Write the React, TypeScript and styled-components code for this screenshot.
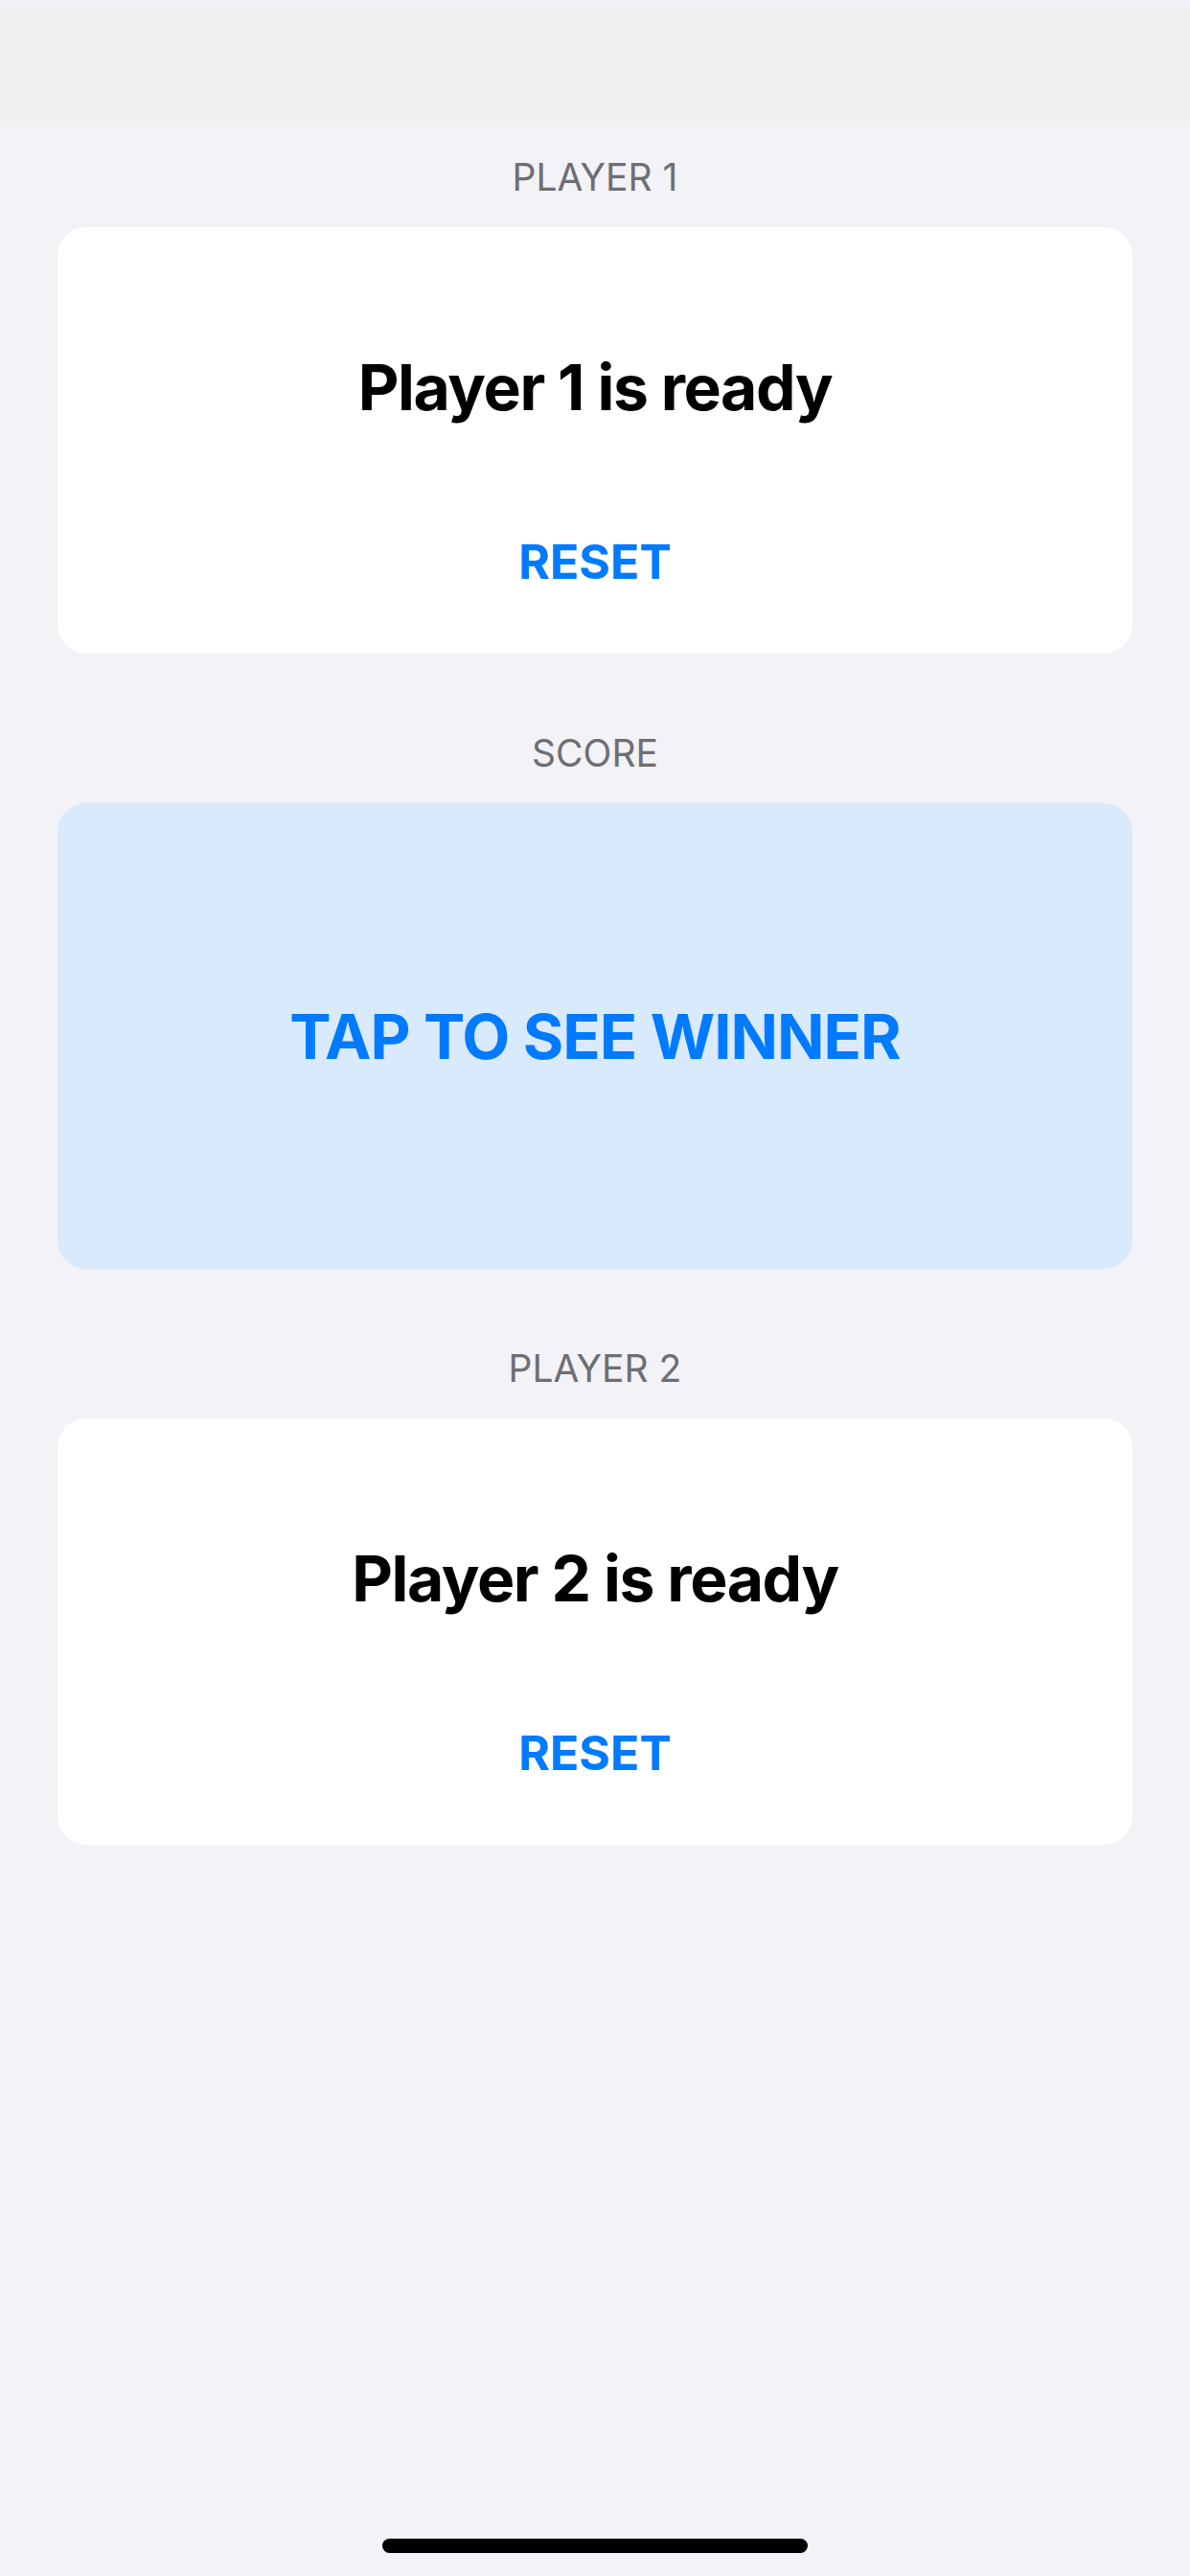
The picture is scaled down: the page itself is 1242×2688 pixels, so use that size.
import styled, { createGlobalStyle } from 'styled-components';

const GlobalStyle = createGlobalStyle`
    html, body {
        margin: 0;
        padding: 0;
        background: #f2f2f7;
    }
    body {
        font-family: Inter, "Noto Sans", "Liberation Sans", sans-serif;
        -webkit-font-smoothing: antialiased;
    }
`;

const Screen = styled.div`
    display: flex;
    flex-direction: column;
    min-height: 100vh;
    background: #f2f2f7;
`;

const NavBar = styled.div`
    margin-top: 7px;
    height: 124px;
    background: #f0f0f0;
`;

const Content = styled.main`
    display: flex;
    flex-direction: column;
    padding: 0 60px;
`;

const SectionLabel = styled.div<{ $first?: boolean }>`
    margin-top: ${props => (props.$first ? '34px' : '84px')};
    margin-bottom: 33px;
    font-size: 39px;
    line-height: 39px;
    font-weight: 400;
    color: #6e6e73;
    text-align: center;
    text-transform: uppercase;
`;

const PlayerCard = styled.section`
    display: flex;
    flex-direction: column;
    align-items: center;
    height: 445px;
    box-sizing: border-box;
    padding-top: 134px;
    background: #ffffff;
    border-radius: 30px;
`;

const PlayerStatus = styled.div`
    font-size: 66px;
    line-height: 66px;
    font-weight: 700;
    color: #000000;
    letter-spacing: -1.4px;
`;

const ResetButton = styled.button`
    margin-top: 124px;
    padding: 0;
    border: none;
    background: none;
    font-family: inherit;
    font-size: 50px;
    line-height: 50px;
    font-weight: 700;
    color: #007aff;
    cursor: pointer;
`;

const ScoreCard = styled.button`
    display: flex;
    align-items: center;
    justify-content: center;
    height: 486px;
    width: 100%;
    border: none;
    border-radius: 30px;
    background: #d9eafd;
    font-family: inherit;
    font-size: 65px;
    line-height: 65px;
    font-weight: 700;
    letter-spacing: -1px;
    color: #007aff;
    cursor: pointer;
`;

const HomeIndicator = styled.div`
    align-self: center;
    margin-top: auto;
    margin-bottom: 24px;
    width: 444px;
    height: 15px;
    border-radius: 8px;
    background: #000000;
`;

type PlayerSectionProps = {
    label: string;
    status: string;
    first?: boolean;
};

const PlayerSection = (props: PlayerSectionProps) => (
    <>
        <SectionLabel $first={props.first}>{props.label}</SectionLabel>
        <PlayerCard>
            <PlayerStatus>{props.status}</PlayerStatus>
            <ResetButton>RESET</ResetButton>
        </PlayerCard>
    </>
);

const App = () => {
    return (
        <Screen>
            <GlobalStyle />
            <NavBar />
            <Content>
                <PlayerSection first label='Player 1' status='Player 1 is ready' />
                <SectionLabel>Score</SectionLabel>
                <ScoreCard>TAP TO SEE WINNER</ScoreCard>
                <PlayerSection label='Player 2' status='Player 2 is ready' />
            </Content>
            <HomeIndicator />
        </Screen>
    );
};

export default App;
